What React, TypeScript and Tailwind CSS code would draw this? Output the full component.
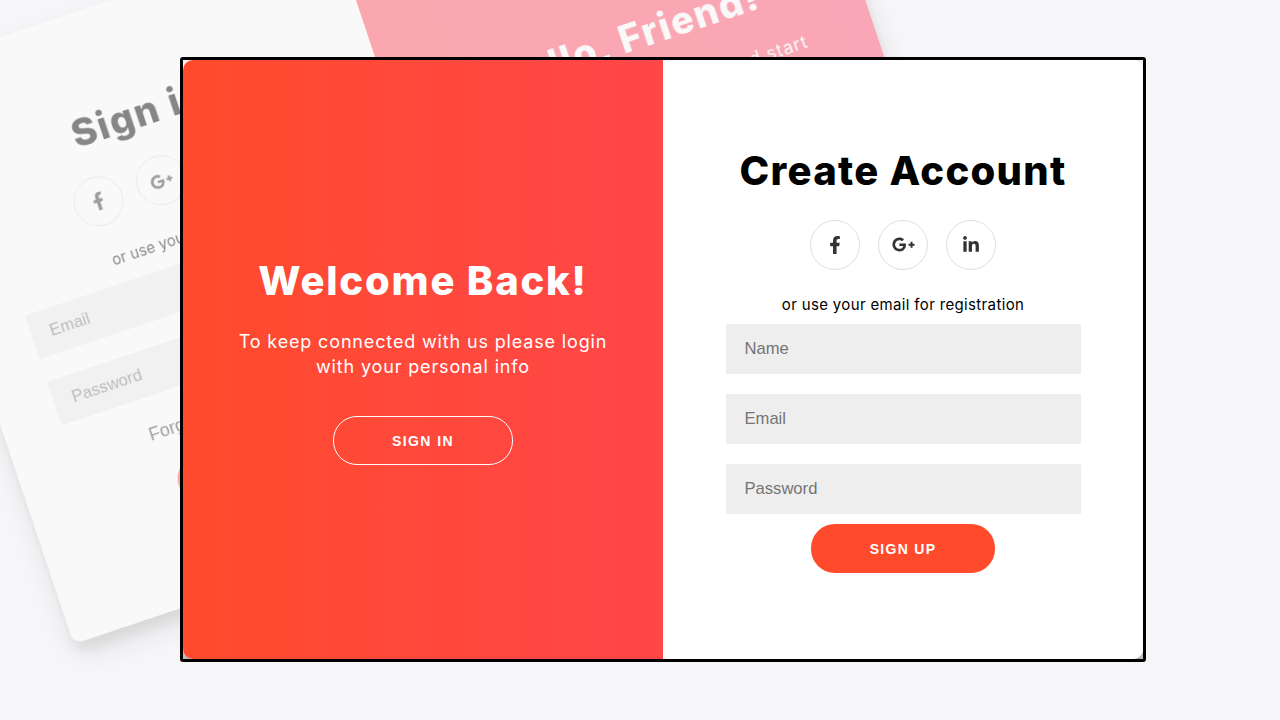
import { FaFacebookF, FaGooglePlusG, FaLinkedinIn } from 'react-icons/fa';

const heading = "font-['Inter',sans-serif] font-[850]";
const body = "font-['Inter',sans-serif]";
const field =
  "rounded-[1px] bg-[#eeeeee] px-[19px] font-['Liberation_Sans',sans-serif] text-[16.6px] placeholder:text-[#757575]";

function Socials({ gap }: { gap: string }) {
  const icons = [FaFacebookF, FaGooglePlusG, FaLinkedinIn];
  return (
    <div className={`flex ${gap}`}>
      {icons.map((Icon, i) => (
        <span
          key={i}
          className="flex h-[50px] w-[50px] items-center justify-center rounded-full border border-[#dddddd] text-[#333333]"
        >
          <Icon className={i === 1 ? 'h-[23px] w-[23px]' : 'h-[18px] w-[18px]'} />
        </span>
      ))}
    </div>
  );
}

function BackgroundCard() {
  return (
    <div className="absolute left-[-46px] top-[-91px] flex h-[599px] w-[955px] -rotate-[18.5deg] overflow-hidden rounded-[10px] bg-white opacity-45 shadow-[0_14px_28px_rgba(0,0,0,0.18),0_10px_10px_rgba(0,0,0,0.12)] blur-[0.6px]">
      <div className="flex w-[472px] flex-col items-center pt-[93px] pr-[20px] pl-[8px]">
        <h2 className={`${heading} text-[38px] leading-[46px] tracking-[1.8px] text-black`}>Sign in</h2>
        <div className="mt-[23px]">
          <Socials gap="gap-4" />
        </div>
        <p className={`${body} mt-[25px] text-[15px] tracking-[0.1px] text-black`}>or use your account</p>
        <input readOnly placeholder="Email" className={`mt-[12px] h-[46px] w-[344px] ${field}`} />
        <input readOnly placeholder="Password" className={`mt-[24px] h-[46px] w-[344px] ${field}`} />
        <p className="mt-[24px] font-['Liberation_Sans',sans-serif] text-[18px] text-[#333333]">Forgot your password?</p>
        <button className="mt-[20px] h-[46px] w-[160px] rounded-[24px] bg-[#ff4b2b] font-['Liberation_Sans',sans-serif] text-sm font-bold tracking-[1.4px] text-white">
          SIGN IN
        </button>
      </div>
      <div className="flex flex-1 flex-col items-center bg-linear-to-r from-[#ff4a5a] to-[#ff4869] pl-[8px] pt-[177px] text-white">
        <h2 className={`${heading} text-[38px] leading-[46px] tracking-[1.8px]`}>Hello, Friend!</h2>
        <p className={`${body} mt-[24px] text-center text-[18px] leading-[25px] tracking-[0.85px]`}>
          Enter your personal details and start
          <br />
          journey with us
        </p>
      </div>
    </div>
  );
}

export default function App() {
  return (
    <div className="relative h-screen w-full overflow-hidden bg-[#f6f5f7]">
      <BackgroundCard />

      <div className="relative pl-[180px] pt-[57px]">
        <div className="h-[605px] w-[966px] overflow-hidden rounded-[3px] border-[3px] border-black">
          <div className="flex h-[599px] w-[960px] overflow-hidden rounded-[10px] bg-white shadow-[0_14px_28px_rgba(0,0,0,0.25),0_10px_10px_rgba(0,0,0,0.22)]">
            <section className="flex w-[480px] flex-col items-center justify-center bg-linear-to-r from-[#ff4b2b] to-[#ff4648] text-white">
              <h1 className={`${heading} text-[40px] leading-[52px] tracking-[1.8px]`}>Welcome Back!</h1>
              <p className={`${body} mt-[22px] text-center text-[18px] leading-[25px] tracking-[0.85px]`}>
                To keep connected with us please login
                <br />
                with your personal info
              </p>
              <button className="mt-[37px] h-[49px] w-[180px] rounded-[24px] border border-white pt-px font-['Liberation_Sans',sans-serif] text-sm font-bold tracking-[1.4px] text-white">
                SIGN IN
              </button>
            </section>

            <section className="flex w-[480px] flex-col items-center justify-center bg-white">
              <h1 className={`${heading} text-[40px] leading-[48px] tracking-[1.3px] text-black`}>Create Account</h1>
              <div className="mt-[25px]">
                <Socials gap="gap-[18px]" />
              </div>
              <p className={`${body} mt-[25px] text-[15px] leading-[20px] tracking-[0.35px] text-black`}>
                or use your email for registration
              </p>
              <div className="mt-[9px] flex w-[355px] flex-col gap-5">
                <input readOnly placeholder="Name" className={`h-[50px] ${field}`} />
                <input readOnly placeholder="Email" className={`h-[50px] ${field}`} />
                <input readOnly placeholder="Password" className={`h-[50px] ${field}`} />
              </div>
              <button className="mt-[10px] h-[49px] w-[184px] rounded-[24px] bg-[#ff4b2b] pt-px font-['Liberation_Sans',sans-serif] text-sm font-bold tracking-[1.3px] text-white">
                SIGN UP
              </button>
            </section>
          </div>
        </div>
      </div>
    </div>
  );
}
